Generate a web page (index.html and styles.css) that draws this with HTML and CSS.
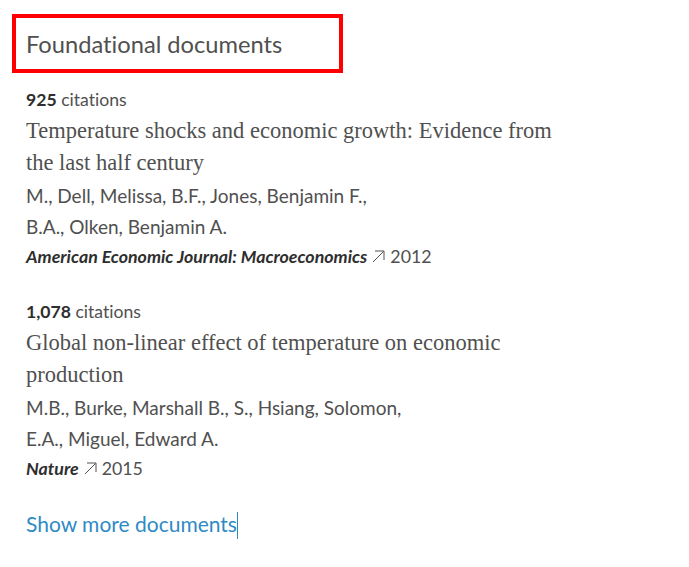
FILE: index.html
```html
<!DOCTYPE html>
<html lang="en">
<head>
<meta charset="UTF-8">
<meta name="viewport" content="width=device-width, initial-scale=1.0">
<title>Foundational documents</title>
<link rel="stylesheet" href="styles.css">
</head>
<body>

<div class="panel">
    <div class="heading-box">
        <h2>Foundational documents</h2>
    </div>

    <ul class="doc-list">
        <li class="doc">
            <div class="cites"><b>925</b> citations</div>
            <div class="doc-title">Temperature shocks and economic growth: Evidence from the last half century</div>
            <div class="authors">M., Dell, Melissa, B.F., Jones, Benjamin F.,<br>B.A., Olken, Benjamin A.</div>
            <div class="source">
                <i>American Economic Journal: Macroeconomics</i>
                <svg class="ext" width="13" height="13" viewBox="0 0 13 13"><path d="M1 12 L11.5 1.5 M3 1 H12 V10" fill="none" stroke="#505050" stroke-width="1"/></svg>
                2012
            </div>
        </li>
        <li class="doc">
            <div class="cites"><b>1,078</b> citations</div>
            <div class="doc-title">Global non-linear effect of temperature on economic production</div>
            <div class="authors">M.B., Burke, Marshall B., S., Hsiang, Solomon,<br>E.A., Miguel, Edward A.</div>
            <div class="source">
                <i>Nature</i>
                <svg class="ext" width="13" height="13" viewBox="0 0 13 13"><path d="M1 12 L11.5 1.5 M3 1 H12 V10" fill="none" stroke="#505050" stroke-width="1"/></svg>
                2015
            </div>
        </li>
    </ul>

    <div class="more-row">
        <a class="more" href="#">Show more documents</a><span class="caret"></span>
    </div>
</div>

</body>
</html>
```

FILE: styles.css
```css
body {
    margin: 0;
    background-color: #fff;
    font-family: Lato, "Open Sans", Arial, sans-serif;
    font-variant-ligatures: none;
    color: #505050;
}

.panel {
    padding: 14px 0 0 12px;
}

.heading-box {
    width: 313px;
    height: 51px;
    border: 4px solid #f00;
    padding-left: 10px;
    display: flex;
    align-items: center;
}

h2 {
    margin: 0;
    font-size: 23.7px;
    font-weight: normal;
    color: #505050;
}

.doc-list {
    list-style: none;
    margin: 14px 0 0 0;
    padding: 0 0 0 14px;
    width: 535px;
}

.doc {
    margin-bottom: 28px;
}

.cites {
    font-size: 17.6px;
    line-height: 26px;
}

.cites b {
    color: #2e2e2e;
}

.doc-title {
    font-family: "Liberation Serif", serif;
    font-size: 22.5px;
    line-height: 32px;
    margin-top: 2px;
}

.authors {
    font-size: 19px;
    line-height: 30.5px;
    margin-top: 2px;
}

.source {
    font-size: 17.8px;
    line-height: 29px;
    display: flex;
    align-items: center;
    gap: 5px;
}

.source i {
    font-weight: bold;
    color: #2e2e2e;
}

.more-row {
    margin-top: 4px;
    padding-left: 14px;
}

.more {
    font-size: 21px;
    color: #2e8ac6;
    text-decoration: none;
}

.caret {
    display: inline-block;
    width: 1px;
    height: 27px;
    background-color: #2e8ac6;
    vertical-align: -7px;
}
```
